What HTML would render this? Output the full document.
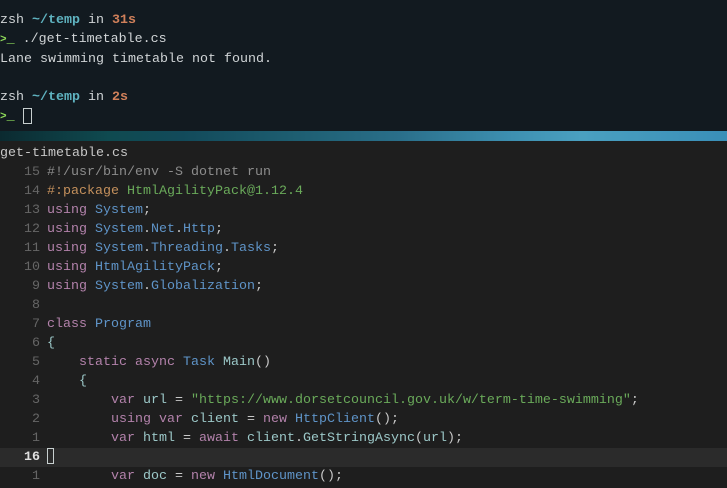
<!DOCTYPE html><html><head><style>
body{margin:0;width:727px;height:488px;overflow:hidden;background:#1e1e1e;font-family:"Liberation Mono",monospace;font-size:13.33px}
.t{position:absolute;left:0;top:0;width:727px;height:131px;background:#121a20;color:#d0d4d6}
.s{position:absolute;left:0;top:131px;width:727px;height:10px;background:linear-gradient(90deg,#0b2a30,#0f4a50 15%,#124a5a 25%,#1d5d70 40%,#2a6f8a 55%,#3d8fb0 70%,#4aa0c0 80%,#3a8fb8 100%)}
.l{height:19px;line-height:19px;white-space:pre}
.tl .l{height:19.3px;line-height:19.3px}
.tl{position:absolute;top:11px;left:0}
.e{position:absolute;top:143.5px;left:0;width:727px;color:#c8c8c8}
.n{display:inline-block;width:40px;text-align:right;color:#666;margin-right:7px}
.k{color:#b382ab}.b{color:#5f94c8}.g{color:#6aaa5a}.c{color:#8c8c8c}.o{color:#c4905c}.i{color:#9cc8c8}
.cy{color:#5fb3c0;font-weight:bold}.or{color:#d0805a;font-weight:bold}.gr{color:#8fdc5a;font-weight:bold}
.cur{display:inline-block;width:7px;height:14px;border:1.5px solid #c8d0d0;vertical-align:middle;box-sizing:border-box}
.hl{background:#2b2b2b}
.p{font-size:11px}
</style></head><body>
<div class="t"><div class="tl">
<div class="l">zsh <span class="cy">~/temp</span> in <span class="or">31s</span></div>
<div class="l"><span class="gr"><span class="p">&gt;</span>_</span> ./get-timetable.cs</div>
<div class="l">Lane swimming timetable not found.</div>
<div class="l"> </div>
<div class="l">zsh <span class="cy">~/temp</span> in <span class="or">2s</span></div>
<div class="l"><span class="gr"><span class="p">&gt;</span>_</span> <span class="cur" style="width:9px;height:16px"></span></div>
</div></div>
<div class="s"></div>
<div class="e">
<div class="l">get-timetable.cs</div>
<div class="l"><span class="n">15</span><span class="c">#!/usr/bin/env -S dotnet run</span></div>
<div class="l"><span class="n">14</span><span class="o">#:package</span> <span class="g">HtmlAgilityPack@1.12.4</span></div>
<div class="l"><span class="n">13</span><span class="k">using</span> <span class="b">System</span>;</div>
<div class="l"><span class="n">12</span><span class="k">using</span> <span class="b">System</span>.<span class="b">Net</span>.<span class="b">Http</span>;</div>
<div class="l"><span class="n">11</span><span class="k">using</span> <span class="b">System</span>.<span class="b">Threading</span>.<span class="b">Tasks</span>;</div>
<div class="l"><span class="n">10</span><span class="k">using</span> <span class="b">HtmlAgilityPack</span>;</div>
<div class="l"><span class="n">9</span><span class="k">using</span> <span class="b">System</span>.<span class="b">Globalization</span>;</div>
<div class="l"><span class="n">8</span></div>
<div class="l"><span class="n">7</span><span class="k">class</span> <span class="b">Program</span></div>
<div class="l"><span class="n">6</span><span class="i">{</span></div>
<div class="l"><span class="n">5</span>    <span class="k">static async</span> <span class="b">Task</span> <span class="i">Main</span>()</div>
<div class="l"><span class="n">4</span>    <span class="i">{</span></div>
<div class="l"><span class="n">3</span>        <span class="k">var</span> <span class="i">url</span> = <span class="g">"https://www.dorsetcouncil.gov.uk/w/term-time-swimming"</span>;</div>
<div class="l"><span class="n">2</span>        <span class="k">using var</span> <span class="i">client</span> = <span class="k">new</span> <span class="b">HttpClient</span>();</div>
<div class="l"><span class="n">1</span>        <span class="k">var</span> <span class="i">html</span> = <span class="k">await</span> <span class="i">client</span>.<span class="i">GetStringAsync</span>(<span class="i">url</span>);</div>
<div class="l hl"><span class="n" style="color:#e0e0e0;font-weight:bold">16</span><span class="cur" style="height:16px"></span></div>
<div class="l"><span class="n">1</span>        <span class="k">var</span> <span class="i">doc</span> = <span class="k">new</span> <span class="b">HtmlDocument</span>();</div>
</div>
</body></html>
